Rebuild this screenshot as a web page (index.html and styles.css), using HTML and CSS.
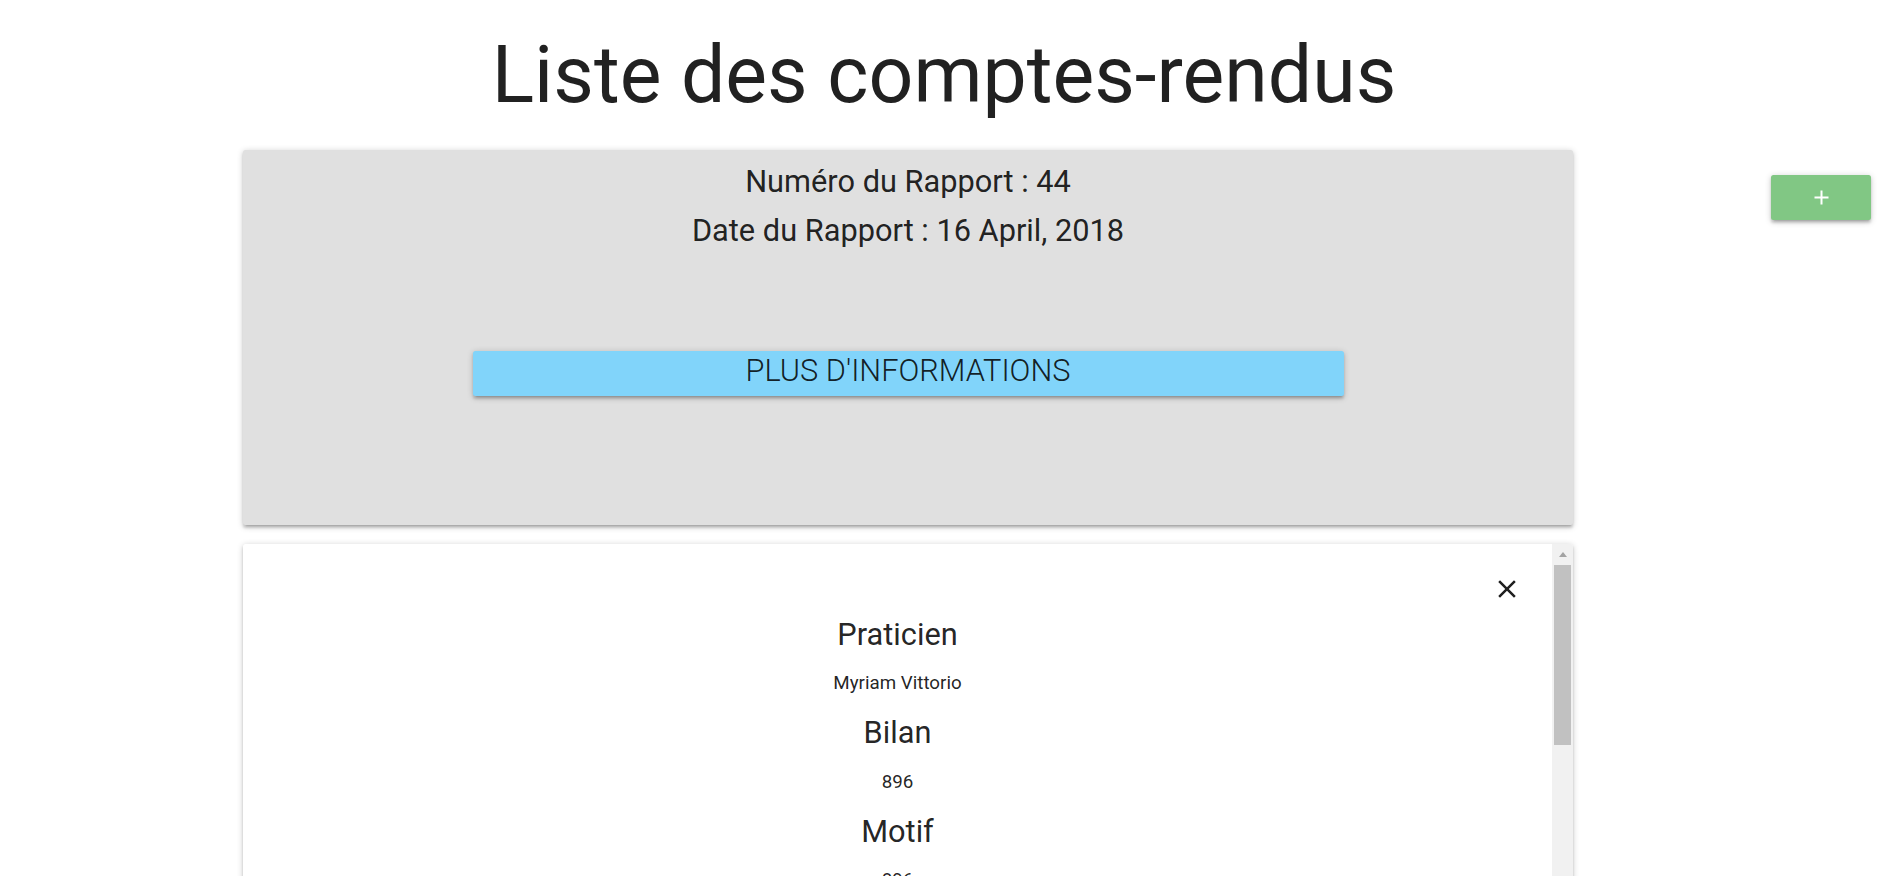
FILE: index.html
```html
<!DOCTYPE html>
<html lang="fr">
<head>
<meta charset="utf-8">
<title>Liste des comptes-rendus</title>
<link rel="stylesheet" href="styles.css">
</head>
<body>
<h1 class="page-title">Liste des comptes-rendus</h1>
<div class="layout">
  <main class="reports">
    <section class="card card-summary">
      <p class="summary-line">Numéro du Rapport : 44</p>
      <p class="summary-line">Date du Rapport : 16 April, 2018</p>
      <button class="btn-info" type="button">PLUS D'INFORMATIONS</button>
    </section>
    <section class="card card-detail">
      <div class="detail-body">
        <div class="detail-head">
          <button class="btn-close" type="button" aria-label="Fermer">
            <svg width="30" height="30" viewBox="0 0 24 24"><path d="M19 6.41L17.59 5 12 10.59 6.41 5 5 6.41 10.59 12 5 17.59 6.41 19 12 13.41 17.59 19 19 17.59 13.41 12z" fill="#212121"/></svg>
          </button>
        </div>
        <h5 class="label">Praticien</h5>
        <p class="value">Myriam Vittorio</p>
        <h5 class="label">Bilan</h5>
        <p class="value">896</p>
        <h5 class="label">Motif</h5>
        <p class="value">896</p>
        <h5 class="label">Visiteur</h5>
        <p class="value">896</p>
      </div>
      <div class="scrollbar">
        <span class="scroll-arrow"><span class="arrow-up"></span></span>
        <span class="scroll-thumb"></span>
      </div>
    </section>
  </main>
  <aside class="actions">
    <button class="btn-add" type="button" aria-label="Ajouter">
      <svg width="15" height="15" viewBox="0 0 15 15"><path d="M7.5 0.5V14.5M0.5 7.5H14.5" stroke="#fff" stroke-width="2" fill="none"/></svg>
    </button>
  </aside>
</div>
</body>
</html>
```

FILE: styles.css
```css
html, body {
  margin: 0;
  height: 100%;
  overflow: hidden;
  background: #fff;
}

body {
  font-family: Roboto, "Liberation Sans", Arial, sans-serif;
  color: rgba(0, 0, 0, 0.87);
}

.page-title {
  margin: 0 0 31.4px;
  padding-top: 32px;
  font-size: 78.75px;
  font-weight: 400;
  line-height: 86.6px;
  text-align: center;
}

.layout {
  display: flex;
  align-items: flex-start;
  padding-left: 243px;
}

.reports {
  width: 1330px;
  flex: none;
}

.card {
  border-radius: 2.5px;
  box-shadow: 0 2.5px 2.5px 0 rgba(0, 0, 0, 0.14),
              0 3.75px 1.25px -2.5px rgba(0, 0, 0, 0.12),
              0 1.25px 6.25px 0 rgba(0, 0, 0, 0.2);
}

.card-summary {
  box-sizing: border-box;
  height: 375px;
  padding-top: 7px;
  background: #e0e0e0;
  display: flex;
  flex-direction: column;
  align-items: center;
}

.summary-line {
  margin: 0;
  font-size: 30.75px;
  line-height: 49px;
}

.btn-info {
  margin-top: 96px;
  width: 871px;
  height: 45px;
  padding: 0 0 6px;
  border: 0;
  border-radius: 2.5px;
  background: #81d4fa;
  color: rgba(0, 0, 0, 0.87);
  font-family: Roboto, "Liberation Sans", Arial, sans-serif;
  font-weight: 300;
  font-size: 30.75px;
  line-height: 39px;
  box-shadow: 0 2.5px 2.5px 0 rgba(0, 0, 0, 0.14),
              0 3.75px 1.25px -2.5px rgba(0, 0, 0, 0.12),
              0 1.25px 6.25px 0 rgba(0, 0, 0, 0.2);
}

.card-detail {
  margin-top: 18.75px;
  height: 640px;
  background: #fff;
  display: flex;
  overflow: hidden;
}

.detail-body {
  flex: 1;
  padding: 30px 30px 0;
  display: flex;
  flex-direction: column;
  align-items: center;
}

.detail-head {
  align-self: stretch;
  display: flex;
  justify-content: flex-end;
  height: 30px;
  margin-bottom: 14px;
}

.btn-close {
  width: 30px;
  height: 30px;
  padding: 0;
  border: 0;
  background: transparent;
  display: flex;
}

.label {
  margin: 0 0 17.5px;
  font-size: 30.75px;
  font-weight: 400;
  line-height: 34px;
}

.value {
  margin: 0 0 19px;
  font-size: 18.75px;
  line-height: 28px;
}

.scrollbar {
  width: 21px;
  flex: none;
  background: #f1f1f1;
  display: flex;
  flex-direction: column;
  align-items: center;
}

.scroll-arrow {
  height: 21px;
  width: 21px;
  display: flex;
  align-items: center;
  justify-content: center;
}

.arrow-up {
  width: 0;
  height: 0;
  border-left: 4px solid transparent;
  border-right: 4px solid transparent;
  border-bottom: 5px solid #a3a3a3;
}

.scroll-thumb {
  width: 17px;
  height: 180px;
  background: #c1c1c1;
}

.actions {
  margin-left: 198px;
  padding-top: 25px;
}

.btn-add {
  width: 100px;
  height: 45px;
  padding: 0;
  border: 0;
  border-radius: 2.5px;
  background: #81c784;
  display: flex;
  align-items: center;
  justify-content: center;
  box-shadow: 0 2.5px 2.5px 0 rgba(0, 0, 0, 0.14),
              0 3.75px 1.25px -2.5px rgba(0, 0, 0, 0.12),
              0 1.25px 6.25px 0 rgba(0, 0, 0, 0.2);
}
```
